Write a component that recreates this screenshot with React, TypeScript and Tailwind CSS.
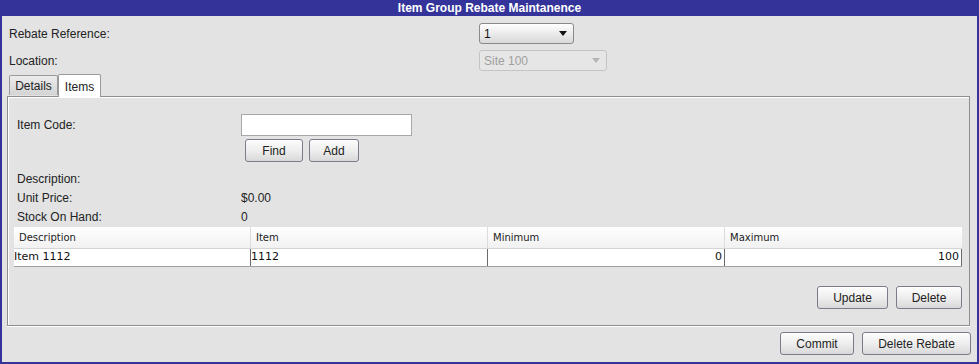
import React from 'react'

const sans = { fontFamily: '"Liberation Sans", Arial, sans-serif' }
const tahoma = { fontFamily: '"DejaVu Sans", Tahoma, sans-serif' }

function Btn({ label, className = '' }: { label: string; className?: string }) {
  return (
    <button
      className={`h-[23px] flex items-center justify-center rounded-[3px] border border-[#7b7b8c] bg-gradient-to-b from-[#fdfdfd] via-[#eeeeee] to-[#d9d9d9] text-[12px] text-[#222] shadow-[inset_0_1px_0_#fff] ${className}`}
      style={sans}
    >
      {label}
    </button>
  )
}

function Caret({ color }: { color: string }) {
  return (
    <svg width="8" height="5" viewBox="0 0 8 5">
      <path d="M0 0 L8 0 L4 5 Z" fill={color} />
    </svg>
  )
}

export default function App() {
  return (
    <div className="w-[979px] h-[364px] flex flex-col bg-[#e3e3e3] text-[12px] text-[#222]" style={sans}>
      {/* Title */}
      <div className="h-[16px] shrink-0 bg-[#333399] flex items-center justify-center text-white font-bold text-[12px] leading-none">
        Item Group Rebate Maintanence
      </div>

      <div className="flex-1 flex flex-col border-x-2 border-b-2 border-[#333399]">
        {/* Header fields */}
        <div className="pl-[7px] pt-[7px] flex flex-col gap-[6px]">
          <div className="flex items-center h-[21px]">
            <div className="w-[470px]">Rebate Reference:</div>
            <div className="w-[95px] h-[21px] rounded-[3px] border border-[#8a8a8a] bg-gradient-to-b from-[#ffffff] to-[#d8d8d8] flex items-center justify-between pl-[4px] pr-[6px]">
              <span className="text-[#111]">1</span>
              <Caret color="#111" />
            </div>
          </div>
          <div className="flex items-center h-[21px]">
            <div className="w-[470px]">Location:</div>
            <div className="w-[128px] h-[21px] rounded-[3px] border border-[#c4c4c4] bg-[#e6e6e6] flex items-center justify-between pl-[4px] pr-[6px]">
              <span className="text-[#a0a0a0]">Site 100</span>
              <Caret color="#b5b5b5" />
            </div>
          </div>
        </div>

        {/* Tabs */}
        <div className="ml-[5px] mr-[7px] mt-[3px] flex flex-col">
          <div className="flex items-end h-[22px] pl-[2px] relative z-10">
            <div className="h-[20px] w-[49px] flex items-center justify-center border border-b-0 border-[#9a9a9a] bg-gradient-to-b from-[#ececec] to-[#d4d4d4] rounded-t-[2px] mb-[1px]">
              Details
            </div>
            <div className="h-[23px] w-[43px] -mb-[1px] flex items-start pt-[3px] justify-center border border-b-0 border-[#9a9a9a] bg-white rounded-t-[2px]">
              Items
            </div>
          </div>

          <div className="h-[230px] border border-[#8e8e8e] shadow-[inset_1px_1px_0_#fff,0_1px_0_#fff] flex flex-col px-[6px]">
            {/* Item code */}
            <div className="flex pt-[17px] pl-[3px]">
              <div className="w-[224px] h-[21px] flex items-center">Item Code:</div>
              <div className="flex flex-col">
                <div className="w-[171px] h-[22px] bg-white border border-[#a8a8a8]" />
                <div className="flex gap-[6px] mt-[3px] ml-[4px]">
                  <Btn label="Find" className="w-[58px]" />
                  <Btn label="Add" className="w-[50px]" />
                </div>
              </div>
            </div>

            <div className="flex flex-col pl-[3px] mt-[7px]">
              <div className="h-[19px] flex items-center">Description:</div>
              <div className="h-[19px] flex items-center">
                <span className="w-[224px]">Unit Price:</span>
                <span>$0.00</span>
              </div>
              <div className="h-[19px] flex items-center">
                <span className="w-[224px]">Stock On Hand:</span>
                <span>0</span>
              </div>
            </div>

            {/* Table */}
            <div className="mt-[1px] mr-[1px] flex flex-col" style={tahoma}>
              <div className="grid grid-cols-4 h-[22px] bg-gradient-to-b from-[#ffffff] to-[#f1f1f1] border-b border-[#d5d5d5] text-[10px] text-[#222]">
                {['Description', 'Item', 'Minimum', 'Maximum'].map((h, i) => (
                  <div
                    key={h}
                    className={`flex items-center pl-[5px] ${i < 3 ? 'border-r border-[#dcdcdc]' : ''}`}
                  >
                    {h}
                  </div>
                ))}
              </div>
              <div className="grid grid-cols-4 h-[18px] bg-white border-b border-[#a0a0a0] text-[11px] text-[#111]">
                <div className="flex items-center border-r border-[#6a6a6a]">Item 1112</div>
                <div className="flex items-center border-r border-[#6a6a6a]">1112</div>
                <div className="flex items-center justify-end pr-[2px] border-r border-[#6a6a6a]">0</div>
                <div className="flex items-center justify-end pr-[2px] border-r border-[#6a6a6a]">100</div>
              </div>
            </div>

            <div className="flex justify-end gap-[8px] mt-[19px] mr-[1px]">
              <Btn label="Update" className="w-[71px]" />
              <Btn label="Delete" className="w-[66px]" />
            </div>
          </div>
        </div>

        {/* Bottom buttons */}
        <div className="flex justify-end gap-[8px] mt-[6px] mr-[6px]">
          <Btn label="Commit" className="w-[74px]" />
          <Btn label="Delete Rebate" className="w-[109px]" />
        </div>
      </div>
    </div>
  )
}
